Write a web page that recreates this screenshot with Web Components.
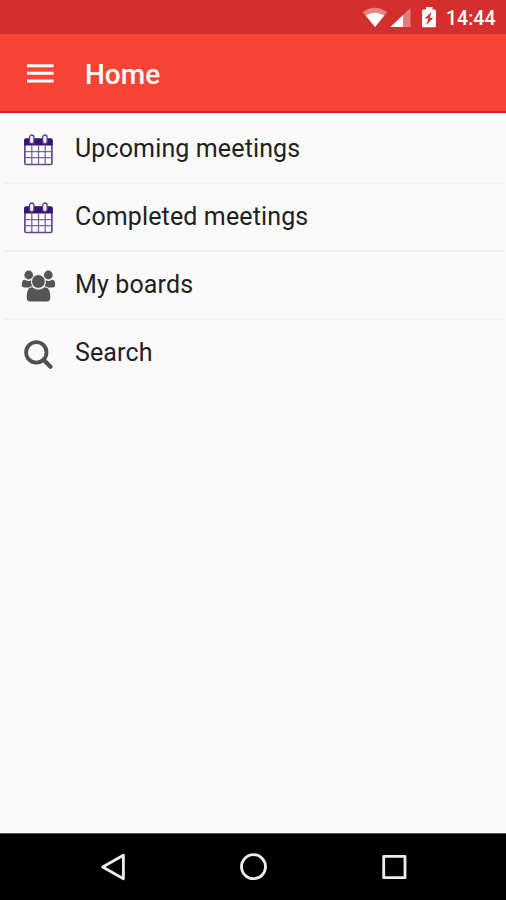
<!DOCTYPE html>
<html lang="en">
<head>
<meta charset="utf-8">
<title>Home</title>
<style>
    body {
        margin: 0;
        font-family: Roboto, "Liberation Sans", sans-serif;
    }
</style>
</head>
<body>
<meeting-app>
    <status-bar slot="status">14:44</status-bar>
    <app-header slot="header">Home</app-header>
    <menu-item icon="calendar">Upcoming meetings</menu-item>
    <menu-item icon="calendar">Completed meetings</menu-item>
    <menu-item icon="users">My boards</menu-item>
    <menu-item icon="search">Search</menu-item>
    <nav-bar slot="nav"></nav-bar>
</meeting-app>

<script>
// Menu icons, all drawn on the same 36x34 grid
const ICONS = {
    calendar: `
        <g transform="translate(1 0)">
            <rect x="3.9" y="6.5" width="27" height="25" rx="1.3" fill="#fff" stroke="#5d4a8e" stroke-width="1.7"/>
            <path d="M3.1 12.4V7.2Q3.1 5.2 5.1 5.2H29.8Q31.7 5.2 31.7 7.2V12.4Z" fill="#351377"/>
            <path d="M4 18.6H31M4 24.7H31M10.8 12.4V31M17.5 12.4V31M24.2 12.4V31" stroke="#756897" stroke-width="1.3"/>
            <rect x="8.5" y="2" width="4.4" height="8.6" rx="2.2" fill="#f4f2f8" stroke="#5b4588" stroke-width="1.3"/>
            <rect x="21.7" y="2" width="4.4" height="8.6" rx="2.2" fill="#f4f2f8" stroke="#5b4588" stroke-width="1.3"/>
        </g>`,
    users: `
        <g fill="#555">
            <circle cx="8.7" cy="6" r="4.4"/>
            <circle cx="28.3" cy="6" r="4.4"/>
            <path d="M4.8 10.7Q8.6 13 11.2 11.3Q11 15 13 18.5H4.5Q1.8 18.5 1.8 16Q1.8 10.8 4.8 10.7Z"/>
            <path d="M32.2 10.7Q28.4 13 25.8 11.3Q26 15 24 18.5H32.5Q35.2 18.5 35.2 16Q35.2 10.8 32.2 10.7Z"/>
        </g>
        <g fill="#555" stroke="#fafafa" stroke-width="1">
            <path d="M12.2 17.8Q18.4 22.5 24.8 17.8C29 17.8 30.8 22.2 30.8 28.2Q30.8 33 26.6 33H10.4Q6.2 33 6.2 28.2C6.2 22.2 8 17.8 12.2 17.8Z"/>
            <circle cx="18.4" cy="12.5" r="6.9"/>
        </g>`,
    search: `
        <g fill="none" stroke="#505050">
            <circle cx="16.3" cy="15.4" r="10.2" stroke-width="3.8"/>
            <path d="M24 23.2L30.5 29.7" stroke-width="4.2" stroke-linecap="round"/>
        </g>`
};

class MeetingApp extends HTMLElement {
    constructor() {
        super();
        this.attachShadow({ mode: 'open' });
        this.shadowRoot.innerHTML = `
            <style>
                :host {
                    display: flex;
                    flex-direction: column;
                    height: 900px;
                    background: #fafafa;
                }
                main {
                    flex: 1;
                    padding: 3px 2px 0 4px;
                }
            </style>
            <slot name="status"></slot>
            <slot name="header"></slot>
            <main><slot></slot></main>
            <slot name="nav"></slot>
        `;
    }
}

class StatusBar extends HTMLElement {
    constructor() {
        super();
        this.attachShadow({ mode: 'open' });
        this.shadowRoot.innerHTML = `
            <style>
                :host {
                    display: flex;
                    justify-content: flex-end;
                    align-items: center;
                    box-sizing: border-box;
                    height: 34px;
                    padding-right: 10px;
                    background: #d32f2f;
                    color: #fff;
                }
                .time {
                    width: 50px;
                    font-size: 19.5px;
                    font-weight: 500;
                    line-height: 34px;
                    padding-top: 3px;
                    white-space: nowrap;
                }
            </style>
            <svg width="84" height="34" viewBox="0 0 84 34">
                <path d="M.8 12.2Q13 3.5 25.2 12.2L13 27Z" fill="#e88383"/>
                <path d="M3.8 15.5Q13 9.8 22.2 15.5L13 27Z" fill="#fff"/>
                <path d="M28.5 27L48.5 8V27Z" fill="#e67c7c"/>
                <path d="M28.5 27L41 15.2V27Z" fill="#fff"/>
                <path d="M62 9.5H64V7H70.5V9.5H72.5Q74 9.5 74 11V25.8Q74 27.3 72.5 27.3H61.5Q60 27.3 60 25.8V11Q60 9.5 61.5 9.5Z" fill="#fff"/>
                <path d="M69.6 11.8L62.7 18.6H66.4L64.3 25L71.3 17.7H67.7Z" fill="#d32f2f"/>
            </svg>
            <div class="time"><slot></slot></div>
        `;
    }
}

class AppHeader extends HTMLElement {
    constructor() {
        super();
        this.attachShadow({ mode: 'open' });
        this.shadowRoot.innerHTML = `
            <style>
                :host {
                    display: flex;
                    align-items: center;
                    box-sizing: border-box;
                    height: 79px;
                    padding-left: 26.5px;
                    background: #f84437;
                    border-bottom: 2px solid #d9201b;
                    color: #fff;
                }
                .title {
                    margin-left: 31.5px;
                    padding-top: 4px;
                    font-size: 28px;
                    font-weight: 500;
                }
            </style>
            <svg width="27" height="20" viewBox="0 0 27 20">
                <path d="M0 2.7H26.5M0 10.3H26.5M0 18H26.5" stroke="#fff" stroke-width="3"/>
            </svg>
            <div class="title"><slot></slot></div>
        `;
    }
}

class MenuItem extends HTMLElement {
    constructor() {
        super();
        this.attachShadow({ mode: 'open' });
    }

    connectedCallback() {
        this.shadowRoot.innerHTML = `
            <style>
                :host {
                    display: flex;
                    align-items: center;
                    box-sizing: border-box;
                    height: 68px;
                    padding-left: 16px;
                    border-bottom: 2px solid #f1f1f1;
                    color: #212121;
                }
                :host(:last-of-type) {
                    border-bottom-color: transparent;
                }
                svg {
                    margin-top: 2px;
                }
                .label {
                    margin-left: 19px;
                    font-size: 25px;
                    line-height: 66px;
                    letter-spacing: 0.13px;
                    white-space: nowrap;
                }
            </style>
            <svg width="36" height="34" viewBox="0 0 36 34">${ICONS[this.getAttribute('icon')]}</svg>
            <div class="label"><slot></slot></div>
        `;
    }
}

class NavBar extends HTMLElement {
    constructor() {
        super();
        this.attachShadow({ mode: 'open' });
        this.shadowRoot.innerHTML = `
            <style>
                :host {
                    display: flex;
                    justify-content: center;
                    align-items: center;
                    gap: 110px;
                    box-sizing: border-box;
                    height: 67px;
                    padding-left: 1px;
                    border-top: 1px solid #555;
                    background: #000;
                }
                svg {
                    fill: none;
                    stroke: #eee;
                    stroke-width: 2.8;
                    stroke-linejoin: round;
                }
            </style>
            <svg width="30" height="30" viewBox="0 0 30 30"><path d="M24.4 3.2V26.8L3.7 15Z"/></svg>
            <svg width="30" height="30" viewBox="0 0 30 30"><circle cx="14.5" cy="14.7" r="12"/></svg>
            <svg width="30" height="30" viewBox="0 0 30 30"><rect x="4.7" y="4.4" width="21.3" height="21.3"/></svg>
        `;
    }
}

customElements.define('meeting-app', MeetingApp);
customElements.define('status-bar', StatusBar);
customElements.define('app-header', AppHeader);
customElements.define('menu-item', MenuItem);
customElements.define('nav-bar', NavBar);
</script>
</body>
</html>
